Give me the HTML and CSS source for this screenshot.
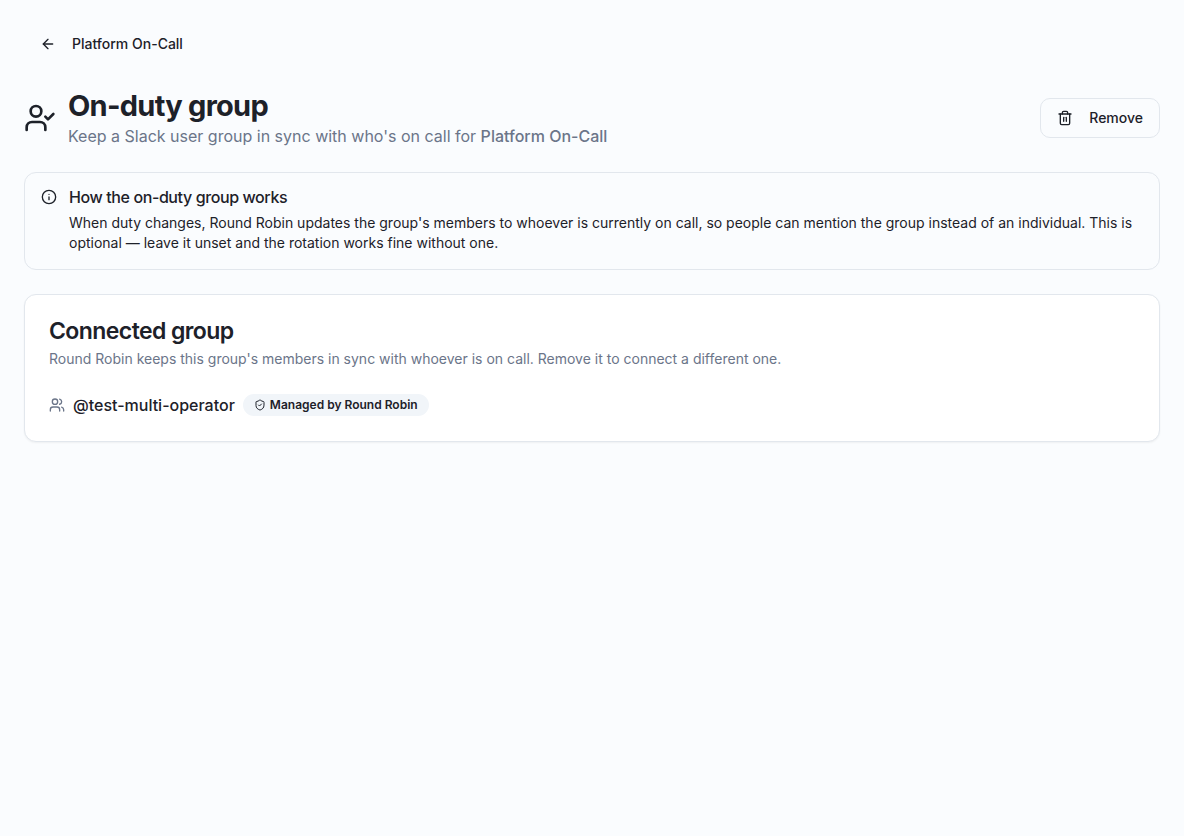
FILE: index.html
```html
<!DOCTYPE html>
<html lang="en">
<head>
<meta charset="utf-8">
<meta name="viewport" content="width=device-width, initial-scale=1">
<title>On-duty group</title>
<link rel="stylesheet" href="styles.css">
</head>
<body>
<main class="page">
  <nav class="nav">
    <a class="back" href="#">
      <svg class="icon icon-sm" viewBox="0 0 24 24" aria-hidden="true"><path d="m12 19-7-7 7-7"/><path d="M19 12H5"/></svg>
      Platform On-Call
    </a>
  </nav>
  <header class="header">
    <svg class="icon icon-lg" viewBox="0 0 24 24" aria-hidden="true"><path d="m16 11 2 2 4-4"/><path d="M16 21v-2a4 4 0 0 0-4-4H6a4 4 0 0 0-4 4v2"/><circle cx="9" cy="7" r="4"/></svg>
    <div class="heading">
      <h1 class="title">On-duty group</h1>
      <p class="subtitle">Keep a Slack user group in sync with who's on call for <strong class="rotation">Platform On-Call</strong></p>
    </div>
    <button class="remove" type="button">
      <svg class="icon icon-sm" viewBox="0 0 24 24" aria-hidden="true"><path d="M3 6h18"/><path d="M19 6v14c0 1-1 2-2 2H7c-1 0-2-1-2-2V6"/><path d="M8 6V4c0-1 1-2 2-2h4c1 0 2 1 2 2v2"/><path d="M10 11v6"/><path d="M14 11v6"/></svg>
      Remove
    </button>
  </header>
  <section class="notice">
    <svg class="icon icon-sm" viewBox="0 0 24 24" aria-hidden="true"><circle cx="12" cy="12" r="10"/><path d="M12 16v-4"/><path d="M12 8h.01"/></svg>
    <div class="notice-body">
      <h2 class="notice-title">How the on-duty group works</h2>
      <p class="notice-text">When duty changes, Round Robin updates the group's members to whoever is currently on call, so people can mention the group instead of an individual. This is optional — leave it unset and the rotation works fine without one.</p>
    </div>
  </section>
  <section class="card">
    <h2 class="card-title">Connected group</h2>
    <p class="card-text">Round Robin keeps this group's members in sync with whoever is on call. Remove it to connect a different one.</p>
    <div class="group">
      <svg class="icon icon-sm muted" viewBox="0 0 24 24" aria-hidden="true"><path d="M16 21v-2a4 4 0 0 0-4-4H6a4 4 0 0 0-4 4v2"/><circle cx="9" cy="7" r="4"/><path d="M22 21v-2a4 4 0 0 0-3-3.87"/><path d="M16 3.13a4 4 0 0 1 0 7.75"/></svg>
      <span class="handle">@test-multi-operator</span>
      <span class="badge">
        <svg class="icon icon-xs" viewBox="0 0 24 24" aria-hidden="true"><path d="M20 13c0 5-3.5 7.500-7.660 8.950a1 1 0 0 1-.67-.01C7.500 20.500 4 18 4 13V6a1 1 0 0 1 1-1c2 0 4.500-1.200 6.240-2.720a1.170 1.170 0 0 1 1.520 0C14.510 3.810 17 5 19 5a1 1 0 0 1 1 1z"/><path d="m9 12 2 2 4-4"/></svg>
        Managed by Round Robin
      </span>
    </div>
  </section>
</main>
</body>
</html>
```

FILE: styles.css
```css
* { box-sizing: border-box; }

body {
  margin: 0;
  min-height: 100vh;
  background: #fafcfe;
  color: #1d2129;
  font-family: Inter, "Liberation Sans", sans-serif;
  font-size: 16px;
  line-height: 24px;
}

h1, h2, p { margin: 0; }

.page {
  display: flex;
  flex-direction: column;
  gap: 24px;
  padding: 24px;
}

.icon {
  flex: none;
  fill: none;
  stroke: currentColor;
  stroke-width: 2;
  stroke-linecap: round;
  stroke-linejoin: round;
}
.icon-xs { width: 12px; height: 12px; }
.icon-sm { width: 16px; height: 16px; }
.icon-lg { width: 32px; height: 32px; }

.nav { display: flex; }

.back {
  display: flex;
  align-items: center;
  gap: 16px;
  height: 40px;
  padding: 0 16px;
  color: inherit;
  font-size: 14px;
  font-weight: 500;
  text-decoration: none;
}

.header {
  display: flex;
  align-items: center;
  gap: 12px;
}

.heading { flex: 1; }

.title {
  font-size: 29px;
  font-weight: 700;
  line-height: 36px;
  letter-spacing: -0.025em;
}

.subtitle { color: #6b7589; }
.rotation { font-weight: 500; }

.remove {
  display: flex;
  align-items: center;
  gap: 16px;
  height: 40px;
  padding: 0 16px;
  border: 1px solid #e2e7ed;
  border-radius: 10px;
  background: #fafcfe;
  color: inherit;
  font: inherit;
  font-size: 14px;
  font-weight: 500;
  cursor: pointer;
}

.notice {
  display: flex;
  gap: 12px;
  padding: 16px;
  border: 1px solid #e2e7ed;
  border-radius: 12px;
}

.notice-title {
  margin-bottom: 8px;
  font-size: 16px;
  font-weight: 500;
  line-height: 16px;
  letter-spacing: -0.025em;
}

.notice-text {
  font-size: 14px;
  line-height: 20px;
}

.card {
  padding: 24px;
  border: 1px solid #e2e7ed;
  border-radius: 12px;
  background: #ffffff;
  box-shadow: 0 1px 2px rgb(0 0 0 / 5%);
}

.card-title {
  font-size: 23px;
  font-weight: 600;
  line-height: 24px;
  letter-spacing: -0.025em;
}

.card-text {
  margin-top: 6px;
  color: #6b7589;
  font-size: 14px;
  line-height: 20px;
}

.group {
  display: flex;
  align-items: center;
  gap: 8px;
  margin-top: 24px;
}

.muted { color: #6b7589; }
.handle { font-weight: 500; }

.badge {
  display: flex;
  align-items: center;
  gap: 4px;
  padding: 3px 11px;
  border-radius: 11px;
  background: #f1f5f9;
  font-size: 12px;
  font-weight: 600;
  line-height: 16px;
}
```
